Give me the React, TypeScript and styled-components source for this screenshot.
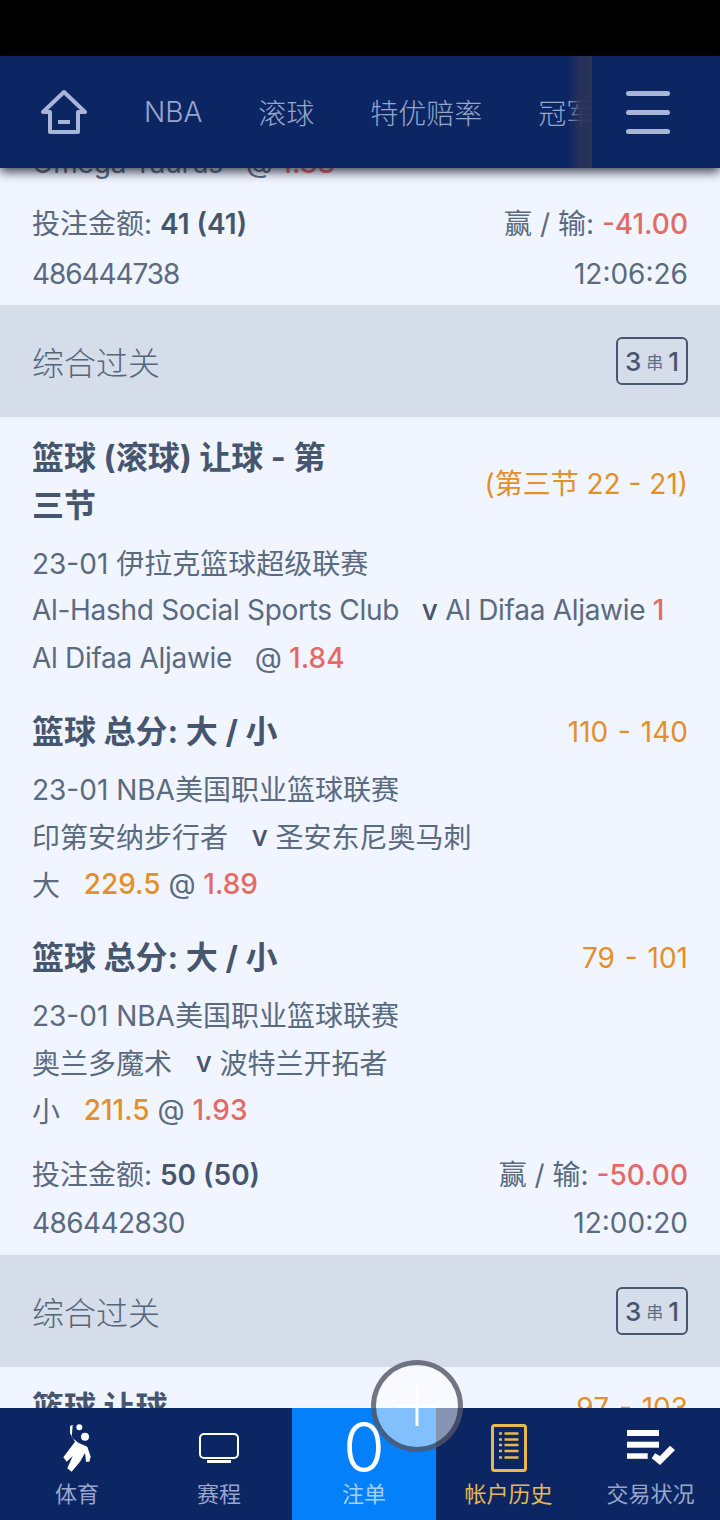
import React from "react";
import styled, { createGlobalStyle } from "styled-components";

const Global = createGlobalStyle`
  html, body { margin: 0; padding: 0; background: #f0f5ff; }
  body { font-family: Inter, "Noto Sans CJK SC", sans-serif; }
`;

const Phone = styled.div`
  position: relative;
  width: 720px;
  height: 1520px;
  overflow: hidden;
  background: #f0f5ff;
  display: flex;
  flex-direction: column;
  color: #5a6a80;
`;

const StatusBar = styled.div`
  height: 56px;
  flex: none;
  background: #000;
`;

const TopBar = styled.header`
  height: 112px;
  flex: none;
  display: flex;
  align-items: center;
  background: #0c2664;
  box-shadow: 0 4px 10px rgba(20, 25, 40, 0.8);
  position: relative;
  z-index: 3;
`;

const HomeCell = styled.div`
  width: 127px;
  flex: none;
  display: flex;
  justify-content: center;
`;

const NavScroller = styled.nav`
  flex: 1;
  height: 100%;
  display: flex;
  align-items: center;
  gap: 56px;
  overflow: hidden;
  position: relative;
  padding-left: 17px;
  &::after {
    content: "";
    position: absolute;
    right: 0;
    top: 0;
    bottom: 0;
    width: 24px;
    background: linear-gradient(to right, rgba(12, 38, 100, 0), rgba(42, 51, 88, 0.9) 50%, #2a3358);
  }
`;

const NavItem = styled.span`
  font-size: 28px;
  color: #98a6cc;
  white-space: nowrap;
  font-weight: 300;
`;

const MenuCell = styled.div`
  width: 128px;
  flex: none;
  display: flex;
  flex-direction: column;
  align-items: center;
  gap: 14px;
  padding-right: 16px;
  box-sizing: border-box;
`;

const MenuLine = styled.span`
  width: 44px;
  height: 5px;
  border-radius: 2.5px;
  background: #a9b5d6;
`;

const Content = styled.main`
  flex: 1;
  min-height: 0;
  overflow: hidden;
  display: flex;
  flex-direction: column;
`;

const ClippedLine = styled.div`
  height: 30px;
  margin-top: -20px;
  flex: none;
  font-size: 28px;
  line-height: 30px;
  padding-left: 32px;
  letter-spacing: -0.2px;
  white-space: pre;
`;

const Row = styled.div<{ $h: number; $top?: number }>`
  display: flex;
  justify-content: space-between;
  align-items: center;
  height: ${(p) => p.$h}px;
  margin-top: ${(p) => p.$top ?? 0}px;
  font-size: 28px;
  padding: 0 32px;
  white-space: pre;
  flex: none;
`;

const Line = styled.div<{ $top?: number; $track?: number }>`
  height: 48px;
  margin-top: ${(p) => p.$top ?? 0}px;
  letter-spacing: ${(p) => p.$track ?? 0}px;
  display: flex;
  align-items: center;
  font-size: 28px;
  padding: 0 32px;
  white-space: pre;
  flex: none;
  font-weight: 400;
`;

const Group = styled.div`
  height: 112px;
  margin-top: 8px;
  flex: none;
  background: #d5dcea;
  display: flex;
  align-items: center;
  justify-content: space-between;
  padding: 0 32px;
  font-size: 32px;
  font-weight: 300;
  color: #566679;
`;

const Badge = styled.div`
  width: 72px;
  height: 48px;
  box-sizing: border-box;
  border: 2px solid #46566e;
  border-radius: 6px;
  display: flex;
  align-items: center;
  justify-content: center;
  gap: 5px;
  font-size: 26px;
  font-weight: 500;
  color: #46566e;
`;

const BadgeSmall = styled.span`
  font-size: 17px;
  font-weight: 400;
  color: #5f6e84;
`;

const Strong = styled.span`
  font-weight: 600;
  color: #46566e;
`;

const Versus = styled.span`
  font-weight: 500;
  color: #46566e;
`;

const Red = styled.span`
  color: #e56a66;
  font-weight: 500;
  letter-spacing: 0;
`;

const Orange = styled.span<{ $strong?: boolean; $wide?: boolean }>`
  color: #e58f28;
  font-weight: ${(p) => (p.$strong ? 500 : 400)};
  word-spacing: ${(p) => (p.$wide ? 2 : 0)}px;
`;

const Title = styled.div`
  font-size: 32px;
  line-height: 48px;
  font-weight: 700;
  color: #46566e;
  width: 310px;
`;

const TitleRow = styled.div<{ $pad: number }>`
  display: flex;
  justify-content: space-between;
  align-items: center;
  padding: ${(p) => p.$pad}px 32px 0;
  font-size: 28px;
  flex: none;
`;

const Code = styled.span<{ $track: number }>`
  letter-spacing: ${(p) => p.$track}px;
`;

const Tabs = styled.footer`
  height: 112px;
  flex: none;
  display: grid;
  grid-template-columns: 146px 146px 144px 145px 139px;
  background: #0c2664;
  position: relative;
  z-index: 4;
`;

const Tab = styled.div<{ $active?: boolean; $gold?: boolean; $inset?: number }>`
  display: flex;
  flex-direction: column;
  align-items: center;
  box-sizing: border-box;
  padding-left: ${(p) => p.$inset ?? 0}px;
  background: ${(p) => (p.$active ? "#0580fb" : "transparent")};
  color: ${(p) => (p.$gold ? "#e8b850" : p.$active ? "#a6d0fb" : "#98a6cc")};
`;

const TabIcon = styled.div`
  height: 72px;
  box-sizing: border-box;
  padding-top: 8px;
  display: flex;
  align-items: center;
  justify-content: center;
`;

const TabLabel = styled.div`
  font-size: 22px;
  line-height: 28px;
  white-space: nowrap;
`;

const BigZero = styled.div`
  font-size: 68px;
  line-height: 66px;
  height: 72px;
  box-sizing: border-box;
  padding-top: 6px;
  color: #fff;
  font-weight: 300;
`;

const Fab = styled.div`
  position: absolute;
  left: 371px;
  top: 1360px;
  width: 92px;
  height: 92px;
  box-sizing: border-box;
  border-radius: 50%;
  border: 5px solid rgba(25, 30, 50, 0.6);
  background: rgba(255, 255, 255, 0.5);
  z-index: 5;
  display: flex;
  align-items: center;
  justify-content: center;
`;

const App = () => (
  <>
    <Global />
    <Phone>
      <StatusBar />
      <TopBar>
        <HomeCell>
          <svg width="48" height="46" viewBox="0 0 48 46" fill="none" stroke="#a9b5d6" strokeWidth="4" strokeLinejoin="round">
            <path d="M24 3 L45 23 H38 V43 H10 V23 H3 Z" />
            <path d="M18 33 H30" strokeWidth="4" />
          </svg>
        </HomeCell>
        <NavScroller>
          <NavItem>NBA</NavItem>
          <NavItem>滚球</NavItem>
          <NavItem>特优赔率</NavItem>
          <NavItem>冠军</NavItem>
        </NavScroller>
        <MenuCell>
          <MenuLine />
          <MenuLine />
          <MenuLine />
        </MenuCell>
      </TopBar>
      <Content>
        <ClippedLine>
          Omega Taurus   @ <Red>1.83</Red>
        </ClippedLine>
        <Row $h={56} $top={16}>
          <span>投注金额: <Strong>41 (41)</Strong></span>
          <span>赢 / 输: <Red>-41.00</Red></span>
        </Row>
        <Row $h={47}>
          <Code $track={-1.1}>486444738</Code>
          <span>12:06:26</span>
        </Row>
        <Group>
          综合过关
          <Badge>3<BadgeSmall>串</BadgeSmall>1</Badge>
        </Group>
        <TitleRow $pad={17}>
          <Title>篮球 (滚球) 让球 - 第三节</Title>
          <Orange>(第三节 22 - 21)</Orange>
        </TitleRow>
        <Line $top={8}>23-01 伊拉克篮球超级联赛</Line>
        <Line $track={-0.3}>Al-Hashd Social Sports Club   <Versus>v</Versus> Al Difaa Aljawie <Red>1</Red></Line>
        <Line $track={-0.3}>Al Difaa Aljawie   @ <Red>1.84</Red></Line>
        <TitleRow $pad={26}>
          <Title>篮球 总分: 大 / 小</Title>
          <Orange $wide>110 - 140</Orange>
        </TitleRow>
        <Line $top={8}>23-01 NBA美国职业篮球联赛</Line>
        <Line>印第安纳步行者   <Versus>v</Versus> 圣安东尼奥马刺</Line>
        <Line>大   <Orange $strong>229.5</Orange> @ <Red>1.89</Red></Line>
        <TitleRow $pad={26}>
          <Title>篮球 总分: 大 / 小</Title>
          <Orange $wide>79 - 101</Orange>
        </TitleRow>
        <Line $top={8}>23-01 NBA美国职业篮球联赛</Line>
        <Line>奥兰多魔术   <Versus>v</Versus> 波特兰开拓者</Line>
        <Line>小   <Orange $strong>211.5</Orange> @ <Red>1.93</Red></Line>
        <Row $h={53} $top={12}>
          <span>投注金额: <Strong>50 (50)</Strong></span>
          <span>赢 / 输: <Red>-50.00</Red></span>
        </Row>
        <Row $h={48}>
          <Code $track={-0.6}>486442830</Code>
          <span>12:00:20</span>
        </Row>
        <Group>
          综合过关
          <Badge>3<BadgeSmall>串</BadgeSmall>1</Badge>
        </Group>
        <TitleRow $pad={17}>
          <Title>篮球 让球</Title>
          <Orange $wide>97 - 103</Orange>
        </TitleRow>
      </Content>
      <Tabs>
        <Tab $inset={8}>
          <TabIcon>
            <svg width="34" height="52" viewBox="0 0 34 52" fill="#fff">
              <circle cx="19.3" cy="5.3" r="3" />
              <circle cx="25" cy="14.7" r="4" />
              <path d="M10 4 L12.7 3 L11.7 15.3 L18.3 20.7 L27.3 24.7 L30.7 34.7 L29.3 39.7 L26 39.7 L25 31 L20 39.7 L11.7 49.7 L7.3 46.3 L12.7 34 L6.7 39.7 L3.3 35.3 L15 19.7 L10 11.3 Z" />
            </svg>
          </TabIcon>
          <TabLabel>体育</TabLabel>
        </Tab>
        <Tab>
          <TabIcon>
            <svg width="40" height="30" viewBox="0 0 40 30" fill="none" stroke="#fff" strokeWidth="2">
              <rect x="1" y="1" width="38" height="24" rx="4" />
              <path d="M8 28.5 H32" strokeWidth="3" />
            </svg>
          </TabIcon>
          <TabLabel>赛程</TabLabel>
        </Tab>
        <Tab $active>
          <BigZero>0</BigZero>
          <TabLabel>注单</TabLabel>
        </Tab>
        <Tab $gold>
          <TabIcon>
            <svg width="36" height="48" viewBox="0 0 36 48" fill="none" stroke="#e8b850">
              <rect x="1.5" y="1.5" width="33" height="45" rx="2" strokeWidth="3" />
              <path d="M8 9.5H11M13.5 9.5H27.5M8 15.5H11M13.5 15.5H27.5M8 21H11M13.5 21H27.5M8 27H11M13.5 27H27.5M8 33.5H11M13.5 33.5H27.5" strokeWidth="2.4" />
            </svg>
          </TabIcon>
          <TabLabel>帐户历史</TabLabel>
        </Tab>
        <Tab>
          <TabIcon>
            <svg width="48" height="36" viewBox="0 0 48 36" fill="#fff">
              <rect x="0" y="0" width="32" height="6" />
              <rect x="0" y="11.7" width="32" height="6" />
              <rect x="0" y="23.3" width="20.7" height="5.5" />
              <path d="M24.7 28.3 L28 23.3 L33 26 L43 15.7 L48 20 L33 35 Z" />
            </svg>
          </TabIcon>
          <TabLabel>交易状况</TabLabel>
        </Tab>
      </Tabs>
      <Fab>
        <svg width="40" height="40" viewBox="0 0 40 40" stroke="#fff" strokeWidth="3">
          <path d="M20 0V40M0 20H40" />
        </svg>
      </Fab>
    </Phone>
  </>
);

export default App;
